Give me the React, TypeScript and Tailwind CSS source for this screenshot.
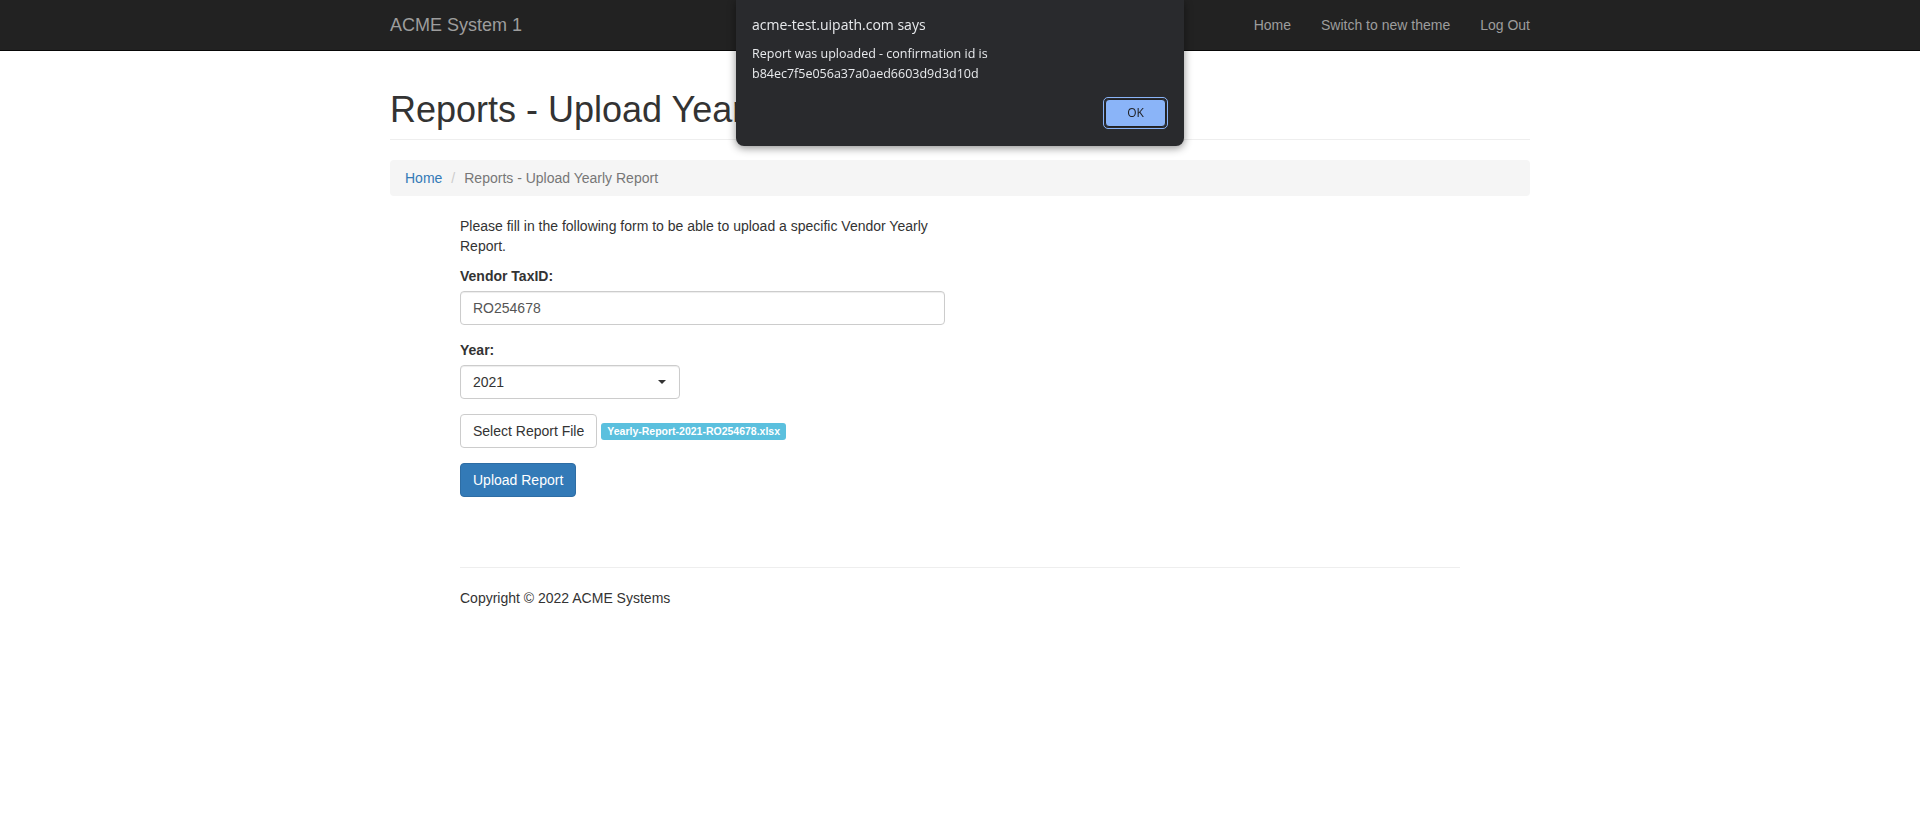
import React from 'react'

const sans = { fontFamily: '"Liberation Sans", Arial, Helvetica, sans-serif' }
const dlg = { fontFamily: '"Open Sans", "Noto Sans", sans-serif' }

function Navbar() {
  return (
    <div className="h-[51px] bg-[#222222] border-b border-[#080808]">
      <div className="w-[1170px] mx-auto px-[15px] h-full flex items-center justify-between">
        <span className="text-[18px] text-[#9d9d9d] leading-[20px]">ACME System 1</span>
        <ul className="flex items-center text-[14px] text-[#9d9d9d] -mr-[15px]">
          <li className="px-[15px]">Home</li>
          <li className="px-[15px]">Switch to new theme</li>
          <li className="px-[15px]">Log Out</li>
        </ul>
      </div>
    </div>
  )
}

function AlertDialog() {
  return (
    <div
      style={dlg}
      className="fixed top-0 left-1/2 -translate-x-1/2 w-[448px] h-[146px] bg-[#292a2d] rounded-b-[8px] shadow-[0_2px_8px_rgba(0,0,0,0.45)] px-[16px] pt-[13px] text-[#e8eaed]"
    >
      <div className="text-[14px] leading-[24px]">acme-test.uipath.com says</div>
      <div className="mt-[7px] text-[12.5px] leading-[20px]">
        <div>Report was uploaded - confirmation id is</div>
        <div>b84ec7f5e056a37a0aed6603d9d3d10d</div>
      </div>
      <div className="flex justify-end mt-[13px]">
        <div className="rounded-[5px] border border-[#8ab4f8] p-[1px]">
          <button className="w-[61px] h-[28px] rounded-[4px] bg-[#8ab4f8] border border-[#202124] text-[#202124] text-[12px]">
            OK
          </button>
        </div>
      </div>
    </div>
  )
}

export default function App() {
  return (
    <div style={sans} className="min-h-screen bg-white text-[#333333] text-[14px] leading-[20px]">
      <Navbar />

      <div className="w-[1170px] mx-auto px-[15px]">
        <div className="pt-[39px] pb-[9px] border-b border-[#eeeeee] mb-[20px]">
          <h1 className="text-[36px] leading-[40px] font-medium">Reports - Upload Yearly Report</h1>
        </div>

        <ol className="flex items-center h-[36px] px-[15px] bg-[#f5f5f5] rounded-[4px] mb-[20px]">
          <li className="text-[#337ab7]">Home</li>
          <li className="text-[#cccccc] pl-[9px] pr-[9px]">/</li>
          <li className="text-[#777777]">Reports - Upload Yearly Report</li>
        </ol>
      </div>

      <div className="w-[1000px] mx-auto">
        <div className="w-[485px]">
          <p className="mb-[10px]">
            Please fill in the following form to be able to upload a specific Vendor Yearly Report.
          </p>

          <div className="mb-[15px]">
            <label className="block font-bold mb-[5px]">Vendor TaxID:</label>
            <div className="h-[34px] border border-[#cccccc] rounded-[4px] px-[12px] flex items-center text-[#555555] shadow-[inset_0_1px_1px_rgba(0,0,0,0.075)]">
              RO254678
            </div>
          </div>

          <div className="mb-[15px]">
            <label className="block font-bold mb-[5px]">Year:</label>
            <div className="w-[220px] h-[34px] border border-[#cccccc] rounded-[4px] px-[12px] flex items-center justify-between text-[#333333] shadow-[inset_0_1px_1px_rgba(0,0,0,0.075)]">
              <span>2021</span>
              <span className="mr-[1px] w-0 h-0 border-l-[4px] border-r-[4px] border-t-[4px] border-l-transparent border-r-transparent border-t-[#333333]" />
            </div>
          </div>

          <div className="flex items-center mb-[15px]">
            <button className="h-[34px] px-[12px] border border-[#cccccc] rounded-[4px] bg-white text-[#333333]">
              Select Report File
            </button>
            <span className="ml-[4px] px-[6px] pt-[2px] pb-[3px] bg-[#5bc0de] text-white text-[10.5px] leading-[12px] font-bold rounded-[3px]">
              Yearly-Report-2021-RO254678.xlsx
            </span>
          </div>

          <button className="h-[34px] px-[12px] border border-[#2e6da4] rounded-[4px] bg-[#337ab7] text-white">
            Upload Report
          </button>
        </div>

        <hr className="mt-[70px] mb-[20px] border-t border-[#eeeeee]" />
        <footer>
          <p>Copyright © 2022 ACME Systems</p>
        </footer>
      </div>

      <AlertDialog />
    </div>
  )
}
